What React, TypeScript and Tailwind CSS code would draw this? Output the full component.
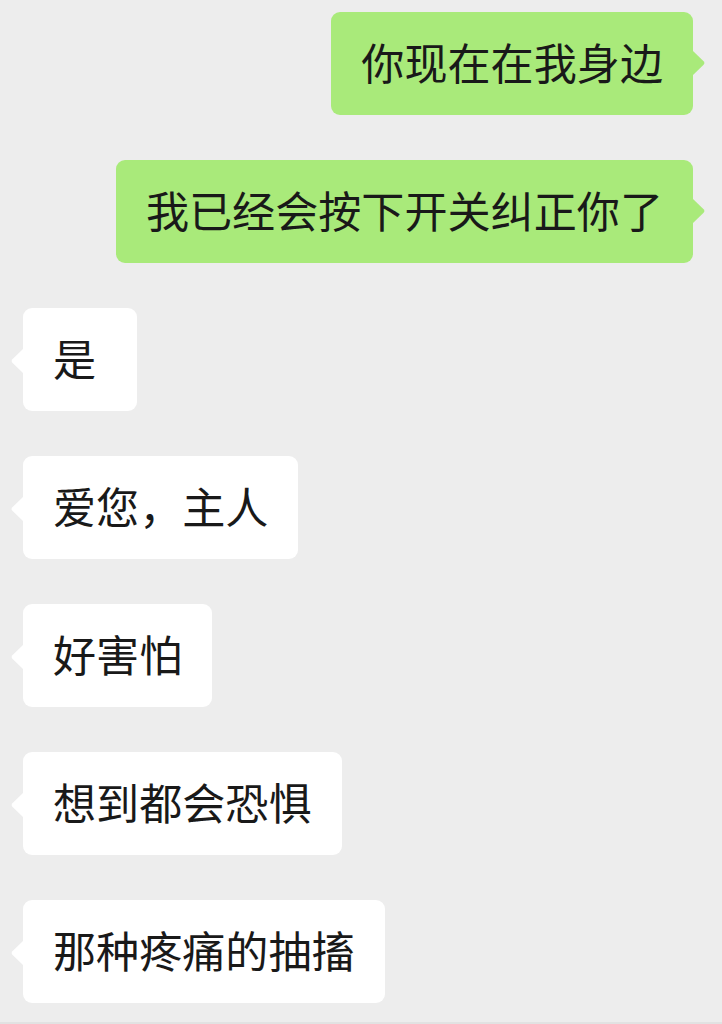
import React from "react";

type Msg = { text: string; mine: boolean };

const msgs: Msg[] = [
  { text: "你现在在我身边", mine: true },
  { text: "我已经会按下开关纠正你了", mine: true },
  { text: "是", mine: false },
  { text: "爱您，主人", mine: false },
  { text: "好害怕", mine: false },
  { text: "想到都会恐惧", mine: false },
  { text: "那种疼痛的抽搐", mine: false },
];

function Tail({ mine }: { mine: boolean }) {
  if (mine) {
    return (
      <svg
        width="14"
        height="26"
        viewBox="0 0 14 26"
        className="absolute right-[-13px] top-[38px]"
      >
        <path d="M0 0 L11.6 11.2 Q13.4 13 11.6 14.8 L0 26 Z" fill="#a9ea7a" />
      </svg>
    );
  }
  return (
    <svg
      width="14"
      height="26"
      viewBox="0 0 14 26"
      className="absolute left-[-13px] top-[40px]"
    >
      <path d="M14 0 L2.4 11.2 Q0.6 13 2.4 14.8 L14 26 Z" fill="#ffffff" />
    </svg>
  );
}

function Bubble({ m }: { m: Msg }) {
  return (
    <div className={m.mine ? "flex justify-end pr-[29px]" : "flex justify-start pl-[23px]"}>
      <div
        className={
          (m.mine ? "bg-[#a9ea7a]" : "bg-white min-w-[114px]") +
          " relative h-[103px] flex items-center px-[30px] pb-[4px] rounded-[9px] text-[43.1px] leading-none text-[#191919] whitespace-nowrap"
        }
      >
        <span>{m.text}</span>
        <Tail mine={m.mine} />
      </div>
    </div>
  );
}

export default function App() {
  return (
    <div
      className="w-[722px] h-[1024px] bg-[#ededed] overflow-hidden flex flex-col gap-[45px] pt-[12px] border-b-2 border-[#e2e2e2]"
      style={{ fontFamily: '"Noto Sans CJK SC", "Noto Sans", sans-serif' }}
    >
      {msgs.map((m, i) => (
        <Bubble key={i} m={m} />
      ))}
    </div>
  );
}
